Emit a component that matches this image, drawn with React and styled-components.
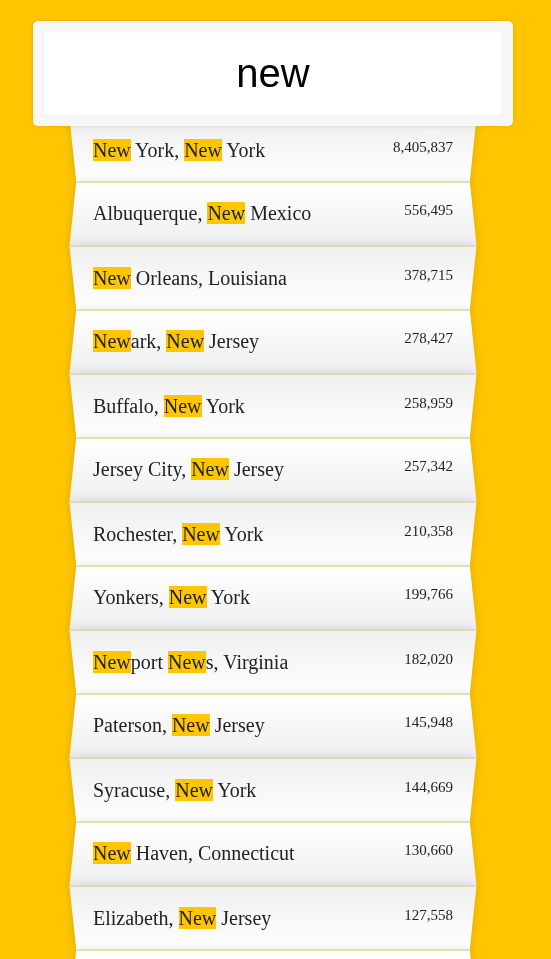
import styled, { createGlobalStyle } from 'styled-components'

const GlobalStyle = createGlobalStyle`
  html {
    box-sizing: border-box;
    background: #ffc600;
    font-family: 'Liberation Serif', 'Times New Roman', serif;
    font-size: 20px;
    font-weight: 400;
  }
  *, *:before, *:after {
    box-sizing: inherit;
  }
  body {
    margin: 0;
  }
`

const SearchForm = styled.form`
  width: 400px;
  margin: 11px 0 0 73px;
`

const SearchInput = styled.input`
  display: block;
  margin: 0;
  padding: 20px;
  width: 120%;
  left: -10%;
  top: 10px;
  position: relative;
  z-index: 2;
  text-align: center;
  outline: 0;
  border: 10px solid #f7f7f7;
  border-radius: 5px;
  font-family: 'Liberation Sans', Arial, sans-serif;
  font-size: 40px;
  color: #000;
  background: #fff;
  box-shadow: 0 0 5px rgba(0, 0, 0, 0.12), inset 0 0 2px rgba(0, 0, 0, 0.19);
`

const Suggestions = styled.ul`
  margin: 0;
  padding: 0;
  position: relative;
`

// the folded card is drawn on ::before so the text itself stays crisp
const Suggestion = styled.li`
  position: relative;
  isolation: isolate;
  list-style: none;
  margin: 0;
  padding: 20px 20px 21px;
  display: flex;
  justify-content: space-between;
  text-transform: capitalize;
  color: #222;

  &::before {
    content: '';
    position: absolute;
    inset: 0;
    z-index: -1;
    border-bottom: 1px solid #d8d8d8;
    box-shadow: 0 0 10px rgba(0, 0, 0, 0.14);
  }

  &:nth-child(even) {
    transform: translateY(2px);
  }
  &:nth-child(even)::before {
    transform: perspective(100px) rotateX(3deg) scale(1.001);
    background: linear-gradient(to bottom, #ffffff 0%, #efefef 100%);
  }

  &:nth-child(odd) {
    transform: translateY(3px);
  }
  &:nth-child(odd)::before {
    transform: perspective(100px) rotateX(-3deg);
    background: linear-gradient(to top, #ffffff 0%, #efefef 100%);
  }
`

const Population = styled.span`
  font-size: 15px;
`

const Hl = styled.span`
  background: #ffc600;
`

const cities = [
  ['New York', 'New York', 8405837],
  ['Albuquerque', 'New Mexico', 556495],
  ['New Orleans', 'Louisiana', 378715],
  ['Newark', 'New Jersey', 278427],
  ['Buffalo', 'New York', 258959],
  ['Jersey City', 'New Jersey', 257342],
  ['Rochester', 'New York', 210358],
  ['Yonkers', 'New York', 199766],
  ['Newport News', 'Virginia', 182020],
  ['Paterson', 'New Jersey', 145948],
  ['Syracuse', 'New York', 144669],
  ['New Haven', 'Connecticut', 130660],
  ['Elizabeth', 'New Jersey', 127558],
  ['Manchester', 'New Hampshire', 110378],
]

const query = 'new'

const highlight = (text) => {
  const parts = text.split(new RegExp(`(${query})`, 'gi'))
  return parts.map((part, i) =>
    part.toLowerCase() === query ? <Hl key={i}>{part}</Hl> : part
  )
}

const withCommas = (n) => n.toString().replace(/\B(?=(\d{3})+(?!\d))/g, ',')

const App = () => {
  return (
    <>
      <GlobalStyle />
      <SearchForm onSubmit={(e) => e.preventDefault()}>
        <SearchInput type="text" defaultValue="new" placeholder="City or State" />
        <Suggestions>
          {cities.map(([city, state, pop]) => (
            <Suggestion key={city}>
              <span>{highlight(`${city}, ${state}`)}</span>
              <Population>{withCommas(pop)}</Population>
            </Suggestion>
          ))}
        </Suggestions>
      </SearchForm>
    </>
  )
}

export default App
